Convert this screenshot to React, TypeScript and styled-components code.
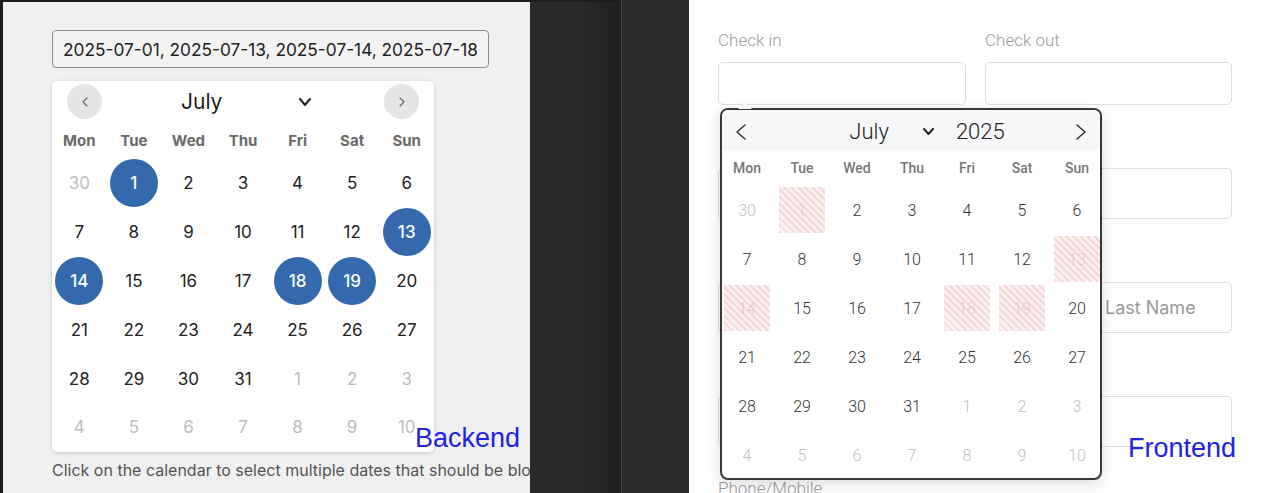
import React from "react";
import styled, { createGlobalStyle, css } from "styled-components";

const GlobalStyle = createGlobalStyle`
  html, body { margin: 0; padding: 0; background: #282828; overflow: hidden; }
  * { box-sizing: border-box; }
`;

const Screen = styled.div`
  display: flex;
  width: 1261px;
  height: 493px;
  overflow: hidden;
`;

const LeftWindow = styled.div`
  display: flex;
  width: 621px;
  height: 493px;
  border-top: 2px solid #1c1c1c;
  padding-left: 3px;
  background: #1c1c1c;
`;

const LeftPane = styled.div`
  position: relative;
  width: 527px;
  height: 100%;
  background: #f0f0f0;
  padding: 28px 0 0 49px;
  overflow: hidden;
  font-family: Inter, "Liberation Sans", sans-serif;
`;

const DarkBody = styled.div`
  width: 91px;
  height: 100%;
  background: linear-gradient(to right, #2a2a2a 0%, #282828 60%, #1f1f1f 100%);
`;

const Divider = styled.div`
  width: 1px;
  background: #454545;
`;

const Gutter = styled.div`
  width: 67px;
  background: #2a2a2a;
`;

const DateField = styled.div`
  display: flex;
  align-items: center;
  width: 437px;
  height: 38px;
  border: 1px solid #8d8d8d;
  border-radius: 4px;
  background: #f3f3f3;
  padding: 0 11px 0 10px;
  font-size: 17.3px;
  color: #222;
`;

const DateValue = styled.span`
  flex: 1;
  min-width: 0;
  overflow: hidden;
  white-space: nowrap;
`;

const Calendar = styled.div`
  margin-top: 13px;
  width: 382px;
  background: #fff;
  border-radius: 5px;
  box-shadow: 0 1px 4px rgba(0, 0, 0, 0.18);
`;

const Header = styled.div`
  display: flex;
  align-items: center;
  justify-content: space-between;
  height: 41px;
  padding: 0 15px;
`;

const NavButton = styled.button`
  display: flex;
  align-items: center;
  justify-content: center;
  width: 35px;
  height: 35px;
  border-radius: 50%;
  border: none;
  background: #e5e5e5;
  padding: 0;
  color: #666;
`;

const MonthSelect = styled.div`
  display: flex;
  align-items: center;
  justify-content: space-between;
  width: 130px;
  margin-left: 6px;
  font-size: 21px;
  color: #1c1c1c;
`;

const WeekRow = styled.div`
  display: grid;
  grid-template-columns: repeat(7, 1fr);
  height: 37px;
  align-items: center;
  text-align: center;
  font-size: 15px;
  font-weight: 700;
  color: #6a6a6a;
`;

const DayGrid = styled.div`
  display: grid;
  grid-template-columns: repeat(7, 1fr);
  grid-auto-rows: 48.8px;
`;

const DayCell = styled.div<{ $muted?: boolean }>`
  display: flex;
  align-items: center;
  justify-content: center;
  font-size: 17px;
  color: ${(p) => (p.$muted ? "#bcbcbc" : "#222")};
`;

const Bubble = styled.span`
  display: flex;
  align-items: center;
  justify-content: center;
  width: 48px;
  height: 48px;
  border-radius: 50%;
  background: #3469ad;
  color: #fff;
  font-weight: 500;
`;

const Hint = styled.div`
  margin-top: 8px;
  white-space: nowrap;
  font-size: 16px;
  line-height: 20px;
  color: #555;
`;

const Tag = styled.div<{ $left: number; $top: number }>`
  position: absolute;
  left: ${(p) => p.$left}px;
  top: ${(p) => p.$top}px;
  font-family: "Liberation Sans", Arial, sans-serif;
  font-size: 27px;
  line-height: 27px;
  color: #2222e2;
  z-index: 5;
`;

/* Right side */

const RightPane = styled.div`
  position: relative;
  flex: 1;
  background: #fff;
  padding: 29px 0 0 29px;
  font-family: Roboto, "Liberation Sans", sans-serif;
`;

const FormGrid = styled.div`
  display: grid;
  grid-template-columns: 248px 247px;
  column-gap: 19px;
  row-gap: 30px;
  width: 514px;
`;

const Field = styled.div<{ $wide?: boolean }>`
  display: flex;
  flex-direction: column;
  ${(p) =>
    p.$wide &&
    css`
      grid-column: span 2;
    `}
`;

const Label = styled.label`
  font-size: 17px;
  font-weight: 300;
  line-height: 22px;
  min-height: 22px;
  color: #9c9c9c;
  margin-bottom: 11px;
`;

const TextBox = styled.input<{ $tall?: boolean }>`
  height: ${(p) => (p.$tall ? 51 : 43)}px;
  border: 1px solid #dedede;
  border-radius: 5px;
  background: #fff;
  padding: 0 14px;
  font-family: Inter, "Liberation Sans", sans-serif;
  font-size: 18px;
  color: #333;
  outline: none;
  &::placeholder {
    color: #999;
  }
`;

const Popup = styled.div`
  position: absolute;
  left: 31px;
  top: 108px;
  width: 382px;
  background: #fff;
  border: 2px solid #383838;
  border-radius: 8px;
  box-shadow: 0 4px 14px rgba(0, 0, 0, 0.14);
  z-index: 3;
  &::before {
    content: "";
    position: absolute;
    left: 16px;
    top: -7px;
    border-left: 7px solid transparent;
    border-right: 7px solid transparent;
    border-bottom: 6px solid #fff;
  }
`;

const PopHeader = styled.div`
  display: flex;
  align-items: center;
  height: 40px;
  padding: 3px 14px 0;
  background: #f6f7f9;
  border-radius: 6px 6px 0 0;
  color: #222;
`;

const PopTitle = styled.div`
  flex: 1;
  display: flex;
  align-items: center;
  justify-content: center;
  padding-left: 32px;
  font-size: 22px;
  font-weight: 300;
`;

const PopMonth = styled.span`
  display: flex;
  align-items: center;
  gap: 34px;
`;

const PopYear = styled.span`
  margin-left: 22px;
`;

const PopWeek = styled.div`
  display: grid;
  grid-template-columns: repeat(7, 46px);
  column-gap: 9px;
  padding: 0 2px;
  height: 36px;
  align-items: center;
  text-align: center;
  font-size: 14px;
  font-weight: 500;
  color: #777;
`;

const PopDays = styled.div`
  display: grid;
  grid-template-columns: repeat(7, 46px);
  grid-auto-rows: 46px;
  column-gap: 9px;
  row-gap: 3px;
  padding: 1px 2px 0;
`;

const PopDay = styled.div<{ $muted?: boolean; $booked?: boolean }>`
  display: flex;
  align-items: center;
  justify-content: center;
  font-size: 16px;
  font-weight: 300;
  color: ${(p) => (p.$muted ? "#c2c2c2" : "#333")};
  ${(p) =>
    p.$booked &&
    css`
      color: #dccaca;
      background: repeating-linear-gradient(
        45deg,
        #f4d8d8 0px,
        #f4d8d8 2px,
        #fcefef 2px,
        #fcefef 5px
      );
    `}
`;

type Day = { n: number; muted?: boolean };

const weeks: Day[][] = [
  [{ n: 30, muted: true }, { n: 1 }, { n: 2 }, { n: 3 }, { n: 4 }, { n: 5 }, { n: 6 }],
  [{ n: 7 }, { n: 8 }, { n: 9 }, { n: 10 }, { n: 11 }, { n: 12 }, { n: 13 }],
  [{ n: 14 }, { n: 15 }, { n: 16 }, { n: 17 }, { n: 18 }, { n: 19 }, { n: 20 }],
  [{ n: 21 }, { n: 22 }, { n: 23 }, { n: 24 }, { n: 25 }, { n: 26 }, { n: 27 }],
  [
    { n: 28 }, { n: 29 }, { n: 30 }, { n: 31 },
    { n: 1, muted: true }, { n: 2, muted: true }, { n: 3, muted: true },
  ],
  [
    { n: 4, muted: true }, { n: 5, muted: true }, { n: 6, muted: true }, { n: 7, muted: true },
    { n: 8, muted: true }, { n: 9, muted: true }, { n: 10, muted: true },
  ],
];

const selected = [1, 13, 14, 18, 19];
const dayNames = ["Mon", "Tue", "Wed", "Thu", "Fri", "Sat", "Sun"];

const Chevron = ({ dir, w, h, stroke, color }: { dir: "l" | "r" | "d"; w: number; h: number; stroke: number; color: string }) => {
  const pts =
    dir === "l"
      ? `${w - 1},1 1,${h / 2} ${w - 1},${h - 1}`
      : dir === "r"
      ? `1,1 ${w - 1},${h / 2} 1,${h - 1}`
      : `1,1 ${w / 2},${h - 1} ${w - 1},1`;
  return (
    <svg width={w} height={h} viewBox={`0 0 ${w} ${h}`} fill="none">
      <polyline points={pts} stroke={color} strokeWidth={stroke} strokeLinecap="round" strokeLinejoin="round" />
    </svg>
  );
};

export default function App() {
  return (
    <>
      <GlobalStyle />
      <Screen>
        <LeftWindow>
          <LeftPane>
            <DateField>
              <DateValue>2025-07-01, 2025-07-13, 2025-07-14, 2025-07-18, 2025-07-19</DateValue>
            </DateField>
            <Calendar>
              <Header>
                <NavButton aria-label="previous month">
                  <Chevron dir="l" w={6} h={10} stroke={1.1} color="#666" />
                </NavButton>
                <MonthSelect>
                  <span>July</span>
                  <Chevron dir="d" w={12} h={8} stroke={2} color="#222" />
                </MonthSelect>
                <NavButton aria-label="next month">
                  <Chevron dir="r" w={6} h={10} stroke={1.1} color="#666" />
                </NavButton>
              </Header>
              <WeekRow>
                {dayNames.map((d) => (
                  <div key={d}>{d}</div>
                ))}
              </WeekRow>
              <DayGrid>
                {weeks.flat().map((d, i) => {
                  const isSel = !d.muted && selected.includes(d.n);
                  return (
                    <DayCell key={i} $muted={d.muted}>
                      {isSel ? <Bubble>{d.n}</Bubble> : d.n}
                    </DayCell>
                  );
                })}
              </DayGrid>
            </Calendar>
            <Hint>Click on the calendar to select multiple dates that should be blocked for bookings.</Hint>
            <Tag $left={412} $top={423}>Backend</Tag>
          </LeftPane>
          <DarkBody />
        </LeftWindow>
        <Divider />
        <Gutter />
        <RightPane>
          <FormGrid>
            <Field>
              <Label>Check in</Label>
              <TextBox />
            </Field>
            <Field>
              <Label>Check out</Label>
              <TextBox />
            </Field>
            <Field $wide>
              <Label>{"\u00a0"}</Label>
              <TextBox $tall />
            </Field>
            <Field $wide>
              <Label>{"\u00a0"}</Label>
              <TextBox $tall placeholder="Enter your First Name, Middle Name(s) and Last Name" />
            </Field>
            <Field $wide>
              <Label>{"\u00a0"}</Label>
              <TextBox $tall />
            </Field>
            <Field $wide>
              <Label>Phone/Mobile</Label>
              <TextBox $tall />
            </Field>
          </FormGrid>
          <Popup>
            <PopHeader>
              <Chevron dir="l" w={10} h={16} stroke={1.5} color="#333" />
              <PopTitle>
                <PopMonth>
                  <span>July</span>
                  <Chevron dir="d" w={11} h={7} stroke={2} color="#222" />
                </PopMonth>
                <PopYear>2025</PopYear>
              </PopTitle>
              <Chevron dir="r" w={10} h={16} stroke={1.5} color="#333" />
            </PopHeader>
            <PopWeek>
              {dayNames.map((d) => (
                <div key={d}>{d}</div>
              ))}
            </PopWeek>
            <PopDays>
              {weeks.flat().map((d, i) => {
                const booked = !d.muted && selected.includes(d.n);
                return (
                  <PopDay key={i} $muted={d.muted} $booked={booked}>
                    {d.n}
                  </PopDay>
                );
              })}
            </PopDays>
          </Popup>
          <Tag $left={439} $top={435}>Frontend</Tag>
        </RightPane>
      </Screen>
    </>
  );
}
